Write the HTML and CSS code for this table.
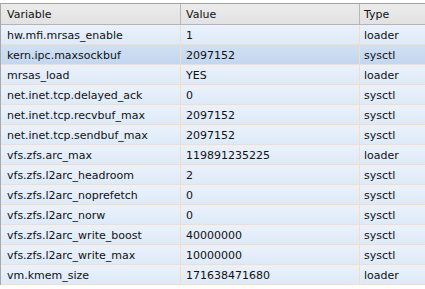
FILE: index.html
```html
<!DOCTYPE html>
<html>
<head>
<meta charset="utf-8">
<link rel="stylesheet" href="styles.css">
</head>
<body>
<div class="grid">
  <div class="row head">
    <div class="c var">Variable</div><div class="c val">Value</div><div class="c typ">Type</div>
  </div>
  <div class="row"><div class="c var">hw.mfi.mrsas_enable</div><div class="c val">1</div><div class="c typ">loader</div></div>
  <div class="row sel"><div class="c var">kern.ipc.maxsockbuf</div><div class="c val">2097152</div><div class="c typ">sysctl</div></div>
  <div class="row"><div class="c var">mrsas_load</div><div class="c val">YES</div><div class="c typ">loader</div></div>
  <div class="row"><div class="c var">net.inet.tcp.delayed_ack</div><div class="c val">0</div><div class="c typ">sysctl</div></div>
  <div class="row"><div class="c var">net.inet.tcp.recvbuf_max</div><div class="c val">2097152</div><div class="c typ">sysctl</div></div>
  <div class="row"><div class="c var">net.inet.tcp.sendbuf_max</div><div class="c val">2097152</div><div class="c typ">sysctl</div></div>
  <div class="row"><div class="c var">vfs.zfs.arc_max</div><div class="c val">119891235225</div><div class="c typ">loader</div></div>
  <div class="row"><div class="c var">vfs.zfs.l2arc_headroom</div><div class="c val">2</div><div class="c typ">sysctl</div></div>
  <div class="row"><div class="c var">vfs.zfs.l2arc_noprefetch</div><div class="c val">0</div><div class="c typ">sysctl</div></div>
  <div class="row"><div class="c var">vfs.zfs.l2arc_norw</div><div class="c val">0</div><div class="c typ">sysctl</div></div>
  <div class="row"><div class="c var">vfs.zfs.l2arc_write_boost</div><div class="c val">40000000</div><div class="c typ">sysctl</div></div>
  <div class="row"><div class="c var">vfs.zfs.l2arc_write_max</div><div class="c val">10000000</div><div class="c typ">sysctl</div></div>
  <div class="row"><div class="c var">vm.kmem_size</div><div class="c val">171638471680</div><div class="c typ">loader</div></div>
</div>
</body>
</html>
```
FILE: styles.css
```css
html, body {
  margin: 0;
  padding: 0;
  background: #ffffff;
  overflow: hidden;
}
body {
  padding-top: 3px;
  font-family: "DejaVu Sans", Verdana, sans-serif;
  font-size: 11px;
  color: #111111;
}
.grid {
  width: 440px;
  border-top: 1px solid #a3a3a3;
  border-left: 1px solid #a8a8a8;
}
.row {
  display: flex;
  height: 19px;
  border-bottom: 1px solid #f6dcc0;
  background: linear-gradient(#e9f2fc, #dfeaf8);
}
.row.sel {
  background: linear-gradient(#cfe0f4, #c3d7ee);
}
.row.head {
  height: 20px;
  border-bottom: 1px solid #b4b4b4;
  background: linear-gradient(#ececec, #e2e2e2);
}
.c {
  display: flex;
  align-items: center;
  padding-left: 6px;
  padding-top: 1px;
  box-sizing: border-box;
  white-space: nowrap;
}
.var {
  width: 180px;
  border-right: 1px solid #f6dcc0;
}
.val {
  width: 179px;
  padding-left: 5px;
  border-right: 1px solid #f6dcc0;
}
.typ {
  flex: 1;
  padding-left: 4px;
}
.head .var, .head .val {
  border-right-color: #b8b8b8;
}
```
